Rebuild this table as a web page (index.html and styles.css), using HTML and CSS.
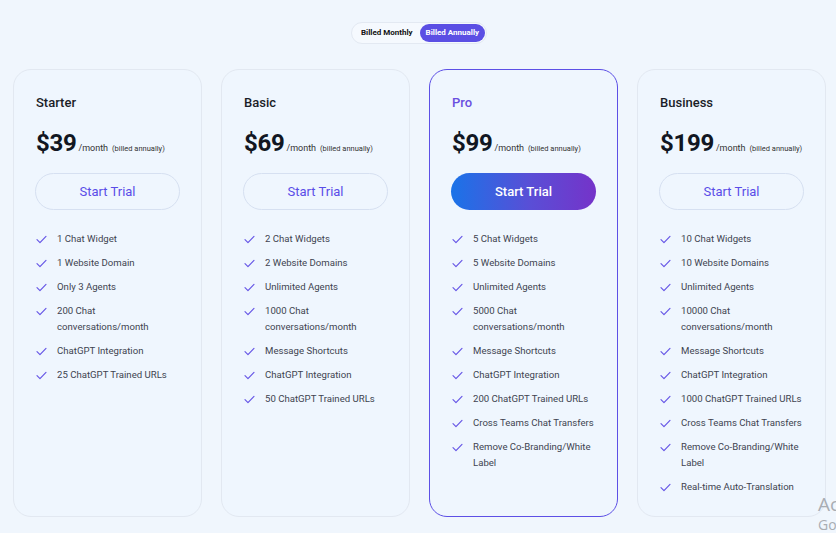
FILE: index.html
```html
<!DOCTYPE html>
<html>
<head>
<meta charset="utf-8">
<link rel="stylesheet" href="styles.css">
</head>
<body>
<div class="page">
  <div class="toggle-wrap">
    <div class="toggle">
      <span class="opt">Billed Monthly</span>
      <span class="opt active">Billed Annually</span>
    </div>
  </div>
  <div class="plans">
    <div class="card">
      <div class="name">Starter</div>
      <div class="price"><span class="amt">$39</span><span class="per">/month</span><span class="note">(billed annually)</span></div>
      <button class="btn">Start Trial</button>
      <ul class="feats">
        <li><svg viewBox="0 0 12 10"><path d="M1 5.2 L4.3 8.5 L11 1.5"/></svg><span>1 Chat Widget</span></li>
        <li><svg viewBox="0 0 12 10"><path d="M1 5.2 L4.3 8.5 L11 1.5"/></svg><span>1 Website Domain</span></li>
        <li><svg viewBox="0 0 12 10"><path d="M1 5.2 L4.3 8.5 L11 1.5"/></svg><span>Only 3 Agents</span></li>
        <li><svg viewBox="0 0 12 10"><path d="M1 5.2 L4.3 8.5 L11 1.5"/></svg><span>200 Chat conversations/month</span></li>
        <li><svg viewBox="0 0 12 10"><path d="M1 5.2 L4.3 8.5 L11 1.5"/></svg><span>ChatGPT Integration</span></li>
        <li><svg viewBox="0 0 12 10"><path d="M1 5.2 L4.3 8.5 L11 1.5"/></svg><span>25 ChatGPT Trained URLs</span></li>
      </ul>
    </div>
    <div class="card">
      <div class="name">Basic</div>
      <div class="price"><span class="amt">$69</span><span class="per">/month</span><span class="note">(billed annually)</span></div>
      <button class="btn">Start Trial</button>
      <ul class="feats">
        <li><svg viewBox="0 0 12 10"><path d="M1 5.2 L4.3 8.5 L11 1.5"/></svg><span>2 Chat Widgets</span></li>
        <li><svg viewBox="0 0 12 10"><path d="M1 5.2 L4.3 8.5 L11 1.5"/></svg><span>2 Website Domains</span></li>
        <li><svg viewBox="0 0 12 10"><path d="M1 5.2 L4.3 8.5 L11 1.5"/></svg><span>Unlimited Agents</span></li>
        <li><svg viewBox="0 0 12 10"><path d="M1 5.2 L4.3 8.5 L11 1.5"/></svg><span>1000 Chat conversations/month</span></li>
        <li><svg viewBox="0 0 12 10"><path d="M1 5.2 L4.3 8.5 L11 1.5"/></svg><span>Message Shortcuts</span></li>
        <li><svg viewBox="0 0 12 10"><path d="M1 5.2 L4.3 8.5 L11 1.5"/></svg><span>ChatGPT Integration</span></li>
        <li><svg viewBox="0 0 12 10"><path d="M1 5.2 L4.3 8.5 L11 1.5"/></svg><span>50 ChatGPT Trained URLs</span></li>
      </ul>
    </div>
    <div class="card featured">
      <div class="name">Pro</div>
      <div class="price"><span class="amt">$99</span><span class="per">/month</span><span class="note">(billed annually)</span></div>
      <button class="btn">Start Trial</button>
      <ul class="feats">
        <li><svg viewBox="0 0 12 10"><path d="M1 5.2 L4.3 8.5 L11 1.5"/></svg><span>5 Chat Widgets</span></li>
        <li><svg viewBox="0 0 12 10"><path d="M1 5.2 L4.3 8.5 L11 1.5"/></svg><span>5 Website Domains</span></li>
        <li><svg viewBox="0 0 12 10"><path d="M1 5.2 L4.3 8.5 L11 1.5"/></svg><span>Unlimited Agents</span></li>
        <li><svg viewBox="0 0 12 10"><path d="M1 5.2 L4.3 8.5 L11 1.5"/></svg><span>5000 Chat conversations/month</span></li>
        <li><svg viewBox="0 0 12 10"><path d="M1 5.2 L4.3 8.5 L11 1.5"/></svg><span>Message Shortcuts</span></li>
        <li><svg viewBox="0 0 12 10"><path d="M1 5.2 L4.3 8.5 L11 1.5"/></svg><span>ChatGPT Integration</span></li>
        <li><svg viewBox="0 0 12 10"><path d="M1 5.2 L4.3 8.5 L11 1.5"/></svg><span>200 ChatGPT Trained URLs</span></li>
        <li><svg viewBox="0 0 12 10"><path d="M1 5.2 L4.3 8.5 L11 1.5"/></svg><span>Cross Teams Chat Transfers</span></li>
        <li><svg viewBox="0 0 12 10"><path d="M1 5.2 L4.3 8.5 L11 1.5"/></svg><span>Remove Co-Branding/White Label</span></li>
      </ul>
    </div>
    <div class="card">
      <div class="name">Business</div>
      <div class="price"><span class="amt">$199</span><span class="per">/month</span><span class="note">(billed annually)</span></div>
      <button class="btn">Start Trial</button>
      <ul class="feats">
        <li><svg viewBox="0 0 12 10"><path d="M1 5.2 L4.3 8.5 L11 1.5"/></svg><span>10 Chat Widgets</span></li>
        <li><svg viewBox="0 0 12 10"><path d="M1 5.2 L4.3 8.5 L11 1.5"/></svg><span>10 Website Domains</span></li>
        <li><svg viewBox="0 0 12 10"><path d="M1 5.2 L4.3 8.5 L11 1.5"/></svg><span>Unlimited Agents</span></li>
        <li><svg viewBox="0 0 12 10"><path d="M1 5.2 L4.3 8.5 L11 1.5"/></svg><span>10000 Chat conversations/month</span></li>
        <li><svg viewBox="0 0 12 10"><path d="M1 5.2 L4.3 8.5 L11 1.5"/></svg><span>Message Shortcuts</span></li>
        <li><svg viewBox="0 0 12 10"><path d="M1 5.2 L4.3 8.5 L11 1.5"/></svg><span>ChatGPT Integration</span></li>
        <li><svg viewBox="0 0 12 10"><path d="M1 5.2 L4.3 8.5 L11 1.5"/></svg><span>1000 ChatGPT Trained URLs</span></li>
        <li><svg viewBox="0 0 12 10"><path d="M1 5.2 L4.3 8.5 L11 1.5"/></svg><span>Cross Teams Chat Transfers</span></li>
        <li><svg viewBox="0 0 12 10"><path d="M1 5.2 L4.3 8.5 L11 1.5"/></svg><span>Remove Co-Branding/White Label</span></li>
        <li><svg viewBox="0 0 12 10"><path d="M1 5.2 L4.3 8.5 L11 1.5"/></svg><span>Real-time Auto-Translation</span></li>
      </ul>
    </div>
  </div>
  <div class="watermark"><div class="wm1">Ac</div><div class="wm2">Go</div></div>
</div>
</body>
</html>
```

FILE: styles.css
```css
* { box-sizing: border-box; }
html, body { margin: 0; padding: 0; }
body {
  background: #f0f6fd;
  font-family: Roboto, "Liberation Sans", sans-serif;
  color: #1b1f2a;
  width: 836px;
  height: 533px;
  overflow: hidden;
}
.page { position: relative; height: 533px; padding-top: 22px; }
.toggle-wrap { display: flex; justify-content: center; padding-left: 2px; }
.toggle {
  display: flex;
  align-items: center;
  gap: 4px;
  padding: 1px 1px 1px 6px;
  border: 1px solid #e3e9f2;
  border-radius: 12px;
  background: #f5f9fe;
  height: 22px;
}
.opt {
  font-size: 8px;
  font-weight: 700;
  color: #111;
  padding: 0 3px;
  line-height: 18px;
  border-radius: 10px;
}
.opt.active {
  background: #5b4fe4;
  color: #fff;
  padding: 0 6px;
}
.plans {
  display: grid;
  grid-template-columns: repeat(4, 189px);
  gap: 19px;
  padding-left: 13px;
  margin-top: 25px;
}
.card {
  height: 448px;
  border: 1px solid #e2e8f1;
  border-radius: 18px;
  background: #eff6fe;
  padding: 25px 14px 0 21px;
}
.card.featured { border: 1.5px solid #5d50e6; }
.name { font-size: 13px; font-weight: 500; color: #1a1d27; line-height: 16px; padding-left: 1px; }
.featured .name { color: #6a4fe0; }
.price {
  display: flex;
  align-items: baseline;
  margin-top: 18px;
  height: 30px;
  padding-left: 1px;
}
.amt { font-size: 24px; font-weight: 700; color: #111622; letter-spacing: -0.3px; }
.per { font-size: 9px; color: #333; margin-left: 2px; }
.note { font-size: 7.5px; color: #333; margin-left: 4px; }
.btn {
  display: block;
  margin-top: 14px;
  width: 145px;
  height: 37px;
  border-radius: 19px;
  border: 1px solid #d6e0f1;
  background: transparent;
  color: #5a4de8;
  font-family: Roboto, "Liberation Sans", sans-serif;
  font-size: 13px;
  font-weight: 400;
  cursor: pointer;
}
.featured .btn {
  border: none;
  background: linear-gradient(90deg, #1a73e8 0%, #5a4ed6 55%, #7533c9 100%);
  color: #fff;
  font-weight: 500;
}
.feats {
  list-style: none;
  margin: 21px 0 0;
  padding: 0 0 0 1px;
  display: flex;
  flex-direction: column;
  gap: 8px;
}
.feats li {
  display: flex;
  align-items: flex-start;
  font-size: 9.6px;
  line-height: 16px;
  color: #404450;
}
.feats svg {
  width: 11px;
  height: 9px;
  margin-top: 4px;
  margin-right: 10px;
  flex: none;
}
.feats path { fill: none; stroke: #6656e6; stroke-width: 1.3; stroke-linecap: round; stroke-linejoin: round; }
.feats span { max-width: 128px; }
.watermark {
  position: absolute;
  left: 818px;
  top: 493px;
  color: #a9adb3;
  white-space: nowrap;
  font-family: "Open Sans", "Liberation Sans", sans-serif;
}
.wm1 { font-size: 19px; line-height: 22px; }
.wm2 { font-size: 14px; line-height: 20px; }
```
